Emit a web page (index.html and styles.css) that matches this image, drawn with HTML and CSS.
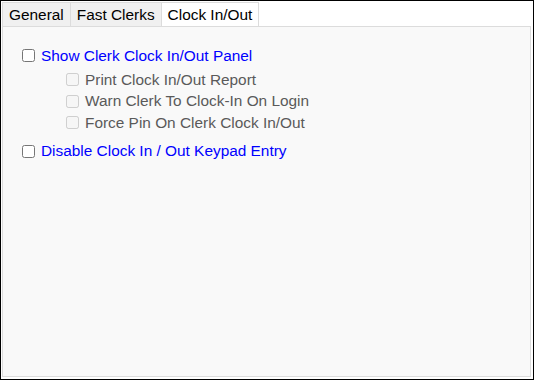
FILE: index.html
```html
<!DOCTYPE html>
<html lang="en">
<head>
<meta charset="UTF-8">
<title>Clerk Settings</title>
<link rel="stylesheet" href="styles.css">
</head>
<body>
<div class="window">
  <div class="tabs">
    <div class="tab">General</div>
    <div class="tab">Fast Clerks</div>
    <div class="tab active">Clock In/Out</div>
  </div>
  <div class="panel">
    <label class="opt"><input type="checkbox"> Show Clerk Clock In/Out Panel</label>
    <div class="sub">
      <label class="opt"><input type="checkbox" disabled> Print Clock In/Out Report</label>
      <label class="opt"><input type="checkbox" disabled> Warn Clerk To Clock-In On Login</label>
      <label class="opt"><input type="checkbox" disabled> Force Pin On Clerk Clock In/Out</label>
    </div>
    <label class="opt"><input type="checkbox"> Disable Clock In / Out Keypad Entry</label>
  </div>
</div>
</body>
</html>
```

FILE: styles.css
```css
html, body {
margin: 0;
padding: 0;
background: #fff;
}
body {
font-family: "Liberation Sans", Arial, sans-serif;
font-size: 15.4px;
}
.window {
width: 534px;
height: 380px;
box-sizing: border-box;
border: 1px solid #000;
padding: 1px 2px 2px 1px;
display: flex;
flex-direction: column;
background: #fff;
}
.tabs {
display: flex;
height: 24px;
}
.tab {
padding: 0 6px;
line-height: 23px;
background: #f0f0f0;
border: 1px solid #dcdcdc;
border-bottom: none;
color: #000;
margin-right: -1px;
}
.tab.active {
background: #fff;
position: relative;
z-index: 1;
}
.panel {
flex: 1;
background: #f9f9f9;
border: 1px solid #dcdcdc;
padding: 18px 19px;
display: flex;
flex-direction: column;
}
.opt {
display: flex;
align-items: center;
gap: 6px;
color: #0000ff;
height: 21px;
}
.opt input {
margin: 0;
width: 13px;
height: 13px;
}
.sub {
display: flex;
flex-direction: column;
padding-left: 44px;
margin: 3px 0 7px 0;
}
.sub .opt {
color: #5a5a5a;
height: 21.5px;
}
```
